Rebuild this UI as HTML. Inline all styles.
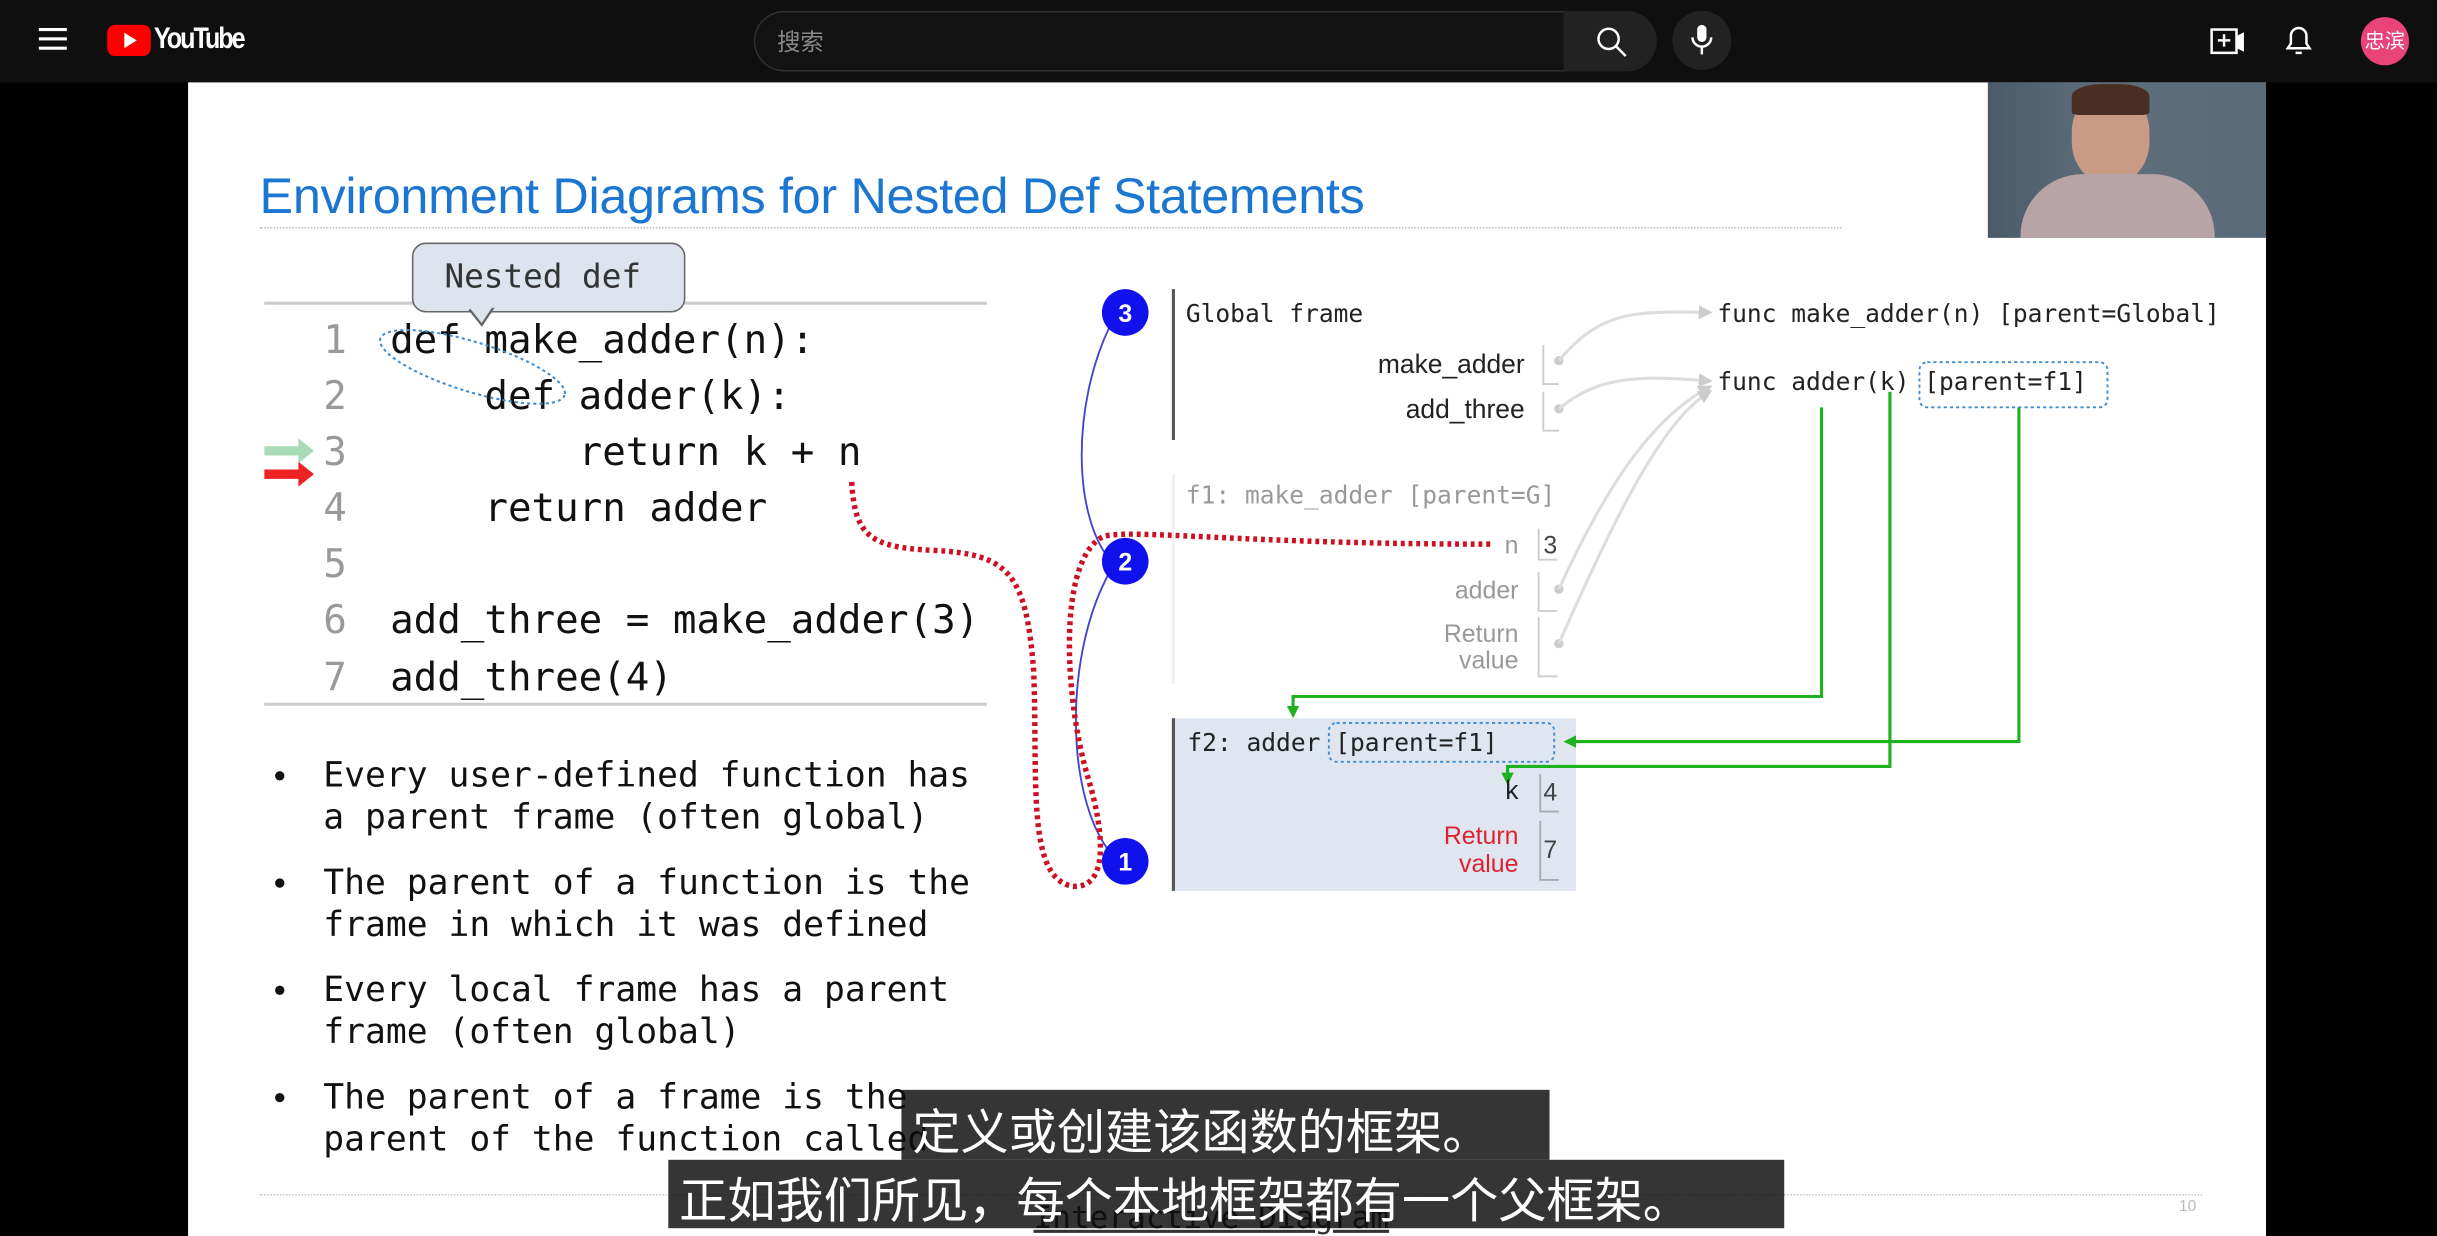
<!DOCTYPE html>
<html><head><meta charset="utf-8">
<style>
html,body{margin:0;padding:0;background:#000;overflow:hidden;width:2437px;height:1236px}
#w{position:absolute;left:0;top:0;width:1568px;height:795px;transform:scale(1.5542,1.5547);transform-origin:0 0;background:#000;font-family:"Liberation Sans","Noto Sans CJK SC",sans-serif}
.a{position:absolute;white-space:pre}
.m{font-family:"DejaVu Sans Mono","Liberation Mono",monospace}
.b{position:absolute;left:208px;font-size:22.3px;line-height:26.8px;color:#111;white-space:pre;font-family:"DejaVu Sans Mono","Liberation Mono",monospace}
.d{position:absolute;left:177px;width:6px;height:6px;border-radius:50%;background:#111}
</style></head><body><div id="w">
<!-- top bar -->
<div class="a" style="left:0;top:0;width:1568px;height:53px;background:#0f0f0f"></div>
<div class="a" style="left:25px;top:18px;width:18px;height:2px;background:#fff;box-shadow:0 6px 0 #fff,0 12px 0 #fff"></div>
<div class="a" style="left:69px;top:16px;width:28px;height:20px;background:#f00;border-radius:5px"></div>
<div class="a" style="left:80px;top:21px;width:0;height:0;border-left:8px solid #fff;border-top:5px solid transparent;border-bottom:5px solid transparent"></div>
<div class="a" style="left:99px;top:15px;color:#fff;font-size:19px;font-weight:bold;letter-spacing:-1.5px;transform:scaleX(0.85);transform-origin:0 0">YouTube</div>
<div class="a" style="left:485px;top:7px;width:520px;height:37px;border:1px solid #303030;border-radius:20px 0 0 20px;background:#121212"></div>
<div class="a" style="left:500px;top:16px;color:#888;font-size:15px">搜索</div>
<div class="a" style="left:1006px;top:7px;width:60px;height:39px;background:#222;border-radius:0 20px 20px 0"></div>
<svg class="a" style="left:1026px;top:16px" width="22" height="22"><circle cx="9" cy="9" r="6.5" stroke="#fff" stroke-width="1.6" fill="none"/><line x1="14" y1="14" x2="20" y2="20" stroke="#fff" stroke-width="1.6"/></svg>
<div class="a" style="left:1076px;top:7px;width:38px;height:38px;background:#222;border-radius:50%"></div>
<svg class="a" style="left:1086px;top:15px" width="18" height="22"><rect x="6" y="1" width="6" height="11" rx="3" fill="#fff"/><path d="M3 9a6 6 0 0 0 12 0M9 15v5" stroke="#fff" stroke-width="1.6" fill="none"/></svg>
<svg class="a" style="left:1421px;top:16px" width="24" height="22"><rect x="2" y="3" width="16" height="15" stroke="#fff" stroke-width="1.6" fill="none"/><path d="M6 10h8M10 6v8M18 8l4-2v10l-4-2" stroke="#fff" stroke-width="1.6" fill="#fff"/></svg>
<svg class="a" style="left:1468px;top:14px" width="22" height="24"><path d="M4 17h14l-2-3V9a5 5 0 0 0-10 0v5z" stroke="#fff" stroke-width="1.6" fill="none"/><path d="M9 20h4" stroke="#fff" stroke-width="1.6"/></svg>
<div class="a" style="left:1519px;top:11px;width:31px;height:31px;border-radius:50%;background:#e9437a;color:#fff;font-size:13px;line-height:31px;text-align:center">忠滨</div>
<!-- slide -->
<div class="a" style="left:121px;top:53px;width:1337px;height:742px;background:#fff"></div>
<div class="a" style="left:1279px;top:53px;width:179px;height:100px;background:linear-gradient(90deg,#4a5a66,#5e6e7a 40%,#5a6a76)"></div>
<div class="a" style="left:1333px;top:58px;width:50px;height:60px;border-radius:45%;background:#c99a86"></div>
<div class="a" style="left:1333px;top:54px;width:50px;height:20px;border-radius:40% 40% 10% 10%;background:#4a2e24"></div>
<div class="a" style="left:1300px;top:112px;width:125px;height:41px;border-radius:40px 40px 0 0;background:#b8a4a6"></div>
<div class="a" style="left:167px;top:108px;color:#1a76d0;font-size:32.4px;letter-spacing:-0.2px">Environment Diagrams for Nested Def Statements</div>
<div class="a" style="left:167px;top:146px;width:1018px;border-top:1.5px dotted #bbb"></div>
<div class="a" style="left:170px;top:194px;width:465px;border-top:2px solid #ccc"></div>
<div class="a" style="left:170px;top:452px;width:465px;border-top:2px solid #ccc"></div>
<!-- code -->
<div class="a m" style="left:208px;top:201px;font-size:25.2px;line-height:36.1px;color:#999">1
2
3
4
5
6
7</div>
<div class="a m" style="left:251px;top:201px;font-size:25.2px;line-height:36.1px;color:#111">def make_adder(n):
    def adder(k):
        return k + n
    return adder

add_three = make_adder(3)
add_three(4)</div>
<svg class="a" style="left:170px;top:282px" width="34" height="34"><path d="M0 5h22v-5l10 8-10 8v-5H0z" fill="#a8dcb5"/><path d="M0 20h22v-5l10 8-10 8v-5H0z" fill="#e22"/></svg>
<div class="a" style="left:265px;top:156px;width:176px;height:45px;background:#dde4ee;border:1.5px solid #666;border-radius:9px;box-sizing:border-box"></div>
<svg class="a" style="left:240px;top:198px" width="140" height="70"><path d="M62 1l8 10 8-12" fill="#dde4ee" stroke="#666" stroke-width="1.5"/><ellipse cx="64" cy="38" rx="62" ry="16" transform="rotate(17 64 38)" fill="none" stroke="#3b8cd0" stroke-width="1.3" stroke-dasharray="2 2"/></svg>
<div class="a m" style="left:286px;top:166px;font-size:21px;color:#333">Nested def</div>
<!-- bullets -->
<div class="d" style="top:496px"></div><div class="b" style="top:486px">Every user-defined function has
a parent frame (often global)</div>
<div class="d" style="top:565px"></div><div class="b" style="top:555px">The parent of a function is the
frame in which it was defined</div>
<div class="d" style="top:634px"></div><div class="b" style="top:624px">Every local frame has a parent
frame (often global)</div>
<div class="d" style="top:703px"></div><div class="b" style="top:693px">The parent of a frame is the
parent of the function called</div>
<div class="a" style="left:167px;top:768px;width:1250px;border-top:1px dotted #ccc"></div>
<div class="a m" style="left:665px;top:771px;font-size:20px;color:#333;text-decoration:underline">Interactive Diagram</div>
<div class="a" style="left:1402px;top:771px;font-size:10px;color:#bbb">10</div>
<!-- diagram -->
<div class="a" style="left:755px;top:462px;width:259px;height:111px;background:#dfe6f0"></div>
<svg class="a" style="left:0;top:0" width="1568" height="795">
<defs><marker id="g" markerWidth="8" markerHeight="8" refX="6" refY="4" orient="auto" markerUnits="userSpaceOnUse"><path d="M0 0L8 4 0 8z" fill="#1fb21f"/></marker>
<marker id="h" markerWidth="9" markerHeight="9" refX="7" refY="4.5" orient="auto" markerUnits="userSpaceOnUse"><path d="M0 0L9 4.5 0 9z" fill="#ccc"/></marker></defs>
<g stroke="#555" stroke-width="2"><line x1="755" y1="186" x2="755" y2="283"/><line x1="755" y1="462" x2="755" y2="573"/></g>
<g stroke="#eee" stroke-width="1.5"><line x1="755" y1="305" x2="755" y2="440"/></g>
<g stroke="#ccc" fill="none" stroke-width="1.2"><path d="M993 222v25h10M993 252v25h10M990 340v20h12M990 368v25h12M990 397v38h12"/></g>
<g stroke="#aaa" fill="none" stroke-width="1.2"><path d="M991 498v24h12M991 528v38h12"/></g>
<g fill="#ccc"><circle cx="1003" cy="232" r="3"/><circle cx="1003" cy="263" r="3"/><circle cx="1003" cy="379" r="3"/><circle cx="1003" cy="414" r="3"/></g>
<g stroke="#ddd" fill="none" stroke-width="2" marker-end="url(#h)"><path d="M1003 232C1030 200 1050 200 1100 201"/><path d="M1003 263C1030 240 1060 242 1100 245"/><path d="M1003 379C1030 320 1060 270 1100 249"/><path d="M1003 414C1040 330 1070 270 1100 252"/></g>
<g stroke="#1fb21f" stroke-width="2" fill="none"><path d="M1172 262V448H832V460" marker-end="url(#g)"/><path d="M1216 252V493H970V503" marker-end="url(#g)"/><path d="M1299 262V477H1008" marker-end="url(#g)"/></g>
<g fill="none" stroke="#3b8cd0" stroke-width="1.2" stroke-dasharray="2 2"><rect x="1235" y="233" width="121" height="29" rx="5"/><rect x="855" y="465" width="145" height="25" rx="5"/></g>
<g stroke="#4444cc" stroke-width="1.2" fill="none"><path d="M714 210C690 260 690 330 714 360"/><path d="M714 368C685 420 685 510 714 548"/></g>
<g stroke="#cc1122" stroke-width="3.5" fill="none" stroke-dasharray="2.5 2.5"><path d="M548 310C550 345 560 352 600 354C650 356 660 370 665 430C668 500 660 565 690 570C712 572 712 540 700 500C685 450 680 360 710 345C730 340 800 350 960 350"/></g>
<g fill="#1111ee"><circle cx="724" cy="201" r="15"/><circle cx="724" cy="361" r="15"/><circle cx="724" cy="554" r="15"/></g>
<g fill="#fff" font-family="Liberation Sans" font-weight="bold" font-size="16" text-anchor="middle"><text x="724" y="207">3</text><text x="724" y="367">2</text><text x="724" y="560">1</text></g>
<g font-family="DejaVu Sans Mono" font-size="15.8" fill="#222"><text x="763" y="207">Global frame</text><text x="1105" y="207">func make_adder(n) [parent=Global]</text><text x="1105" y="251">func adder(k) [parent=f1]</text><text x="764" y="483">f2: adder [parent=f1]</text><text x="763" y="324" fill="#999">f1: make_adder [parent=G]</text></g>
<g font-family="Liberation Sans" font-size="17" text-anchor="end" fill="#222"><text x="981" y="240">make_adder</text><text x="981" y="269">add_three</text><text x="977" y="514">k</text></g>
<g font-family="Liberation Sans" font-size="16" text-anchor="end" fill="#999"><text x="977" y="356">n</text><text x="977" y="385">adder</text><text x="977" y="413">Return</text><text x="977" y="430">value</text></g>
<g font-family="Liberation Sans" font-size="16" text-anchor="end" fill="#d23"><text x="977" y="543">Return</text><text x="977" y="561">value</text></g>
<g font-family="Liberation Sans" font-size="16" fill="#444"><text x="993" y="356">3</text><text x="993" y="515">4</text><text x="993" y="552">7</text></g>
</svg>
<!-- subtitles -->
<div class="a" style="left:580px;top:701px;width:417px;height:45px;background:rgba(8,8,8,0.82)"></div>
<div class="a" style="left:430px;top:746px;width:718px;height:44px;background:rgba(8,8,8,0.82)"></div>
<div class="a" style="left:587px;top:703px;color:#fff;font-size:31px;font-family:'Noto Sans CJK SC',sans-serif">定义或创建该函数的框架。</div>
<div class="a" style="left:437px;top:747px;color:#fff;font-size:31px;font-family:'Noto Sans CJK SC',sans-serif">正如我们所见，每个本地框架都有一个父框架。</div>
</div></body></html>
